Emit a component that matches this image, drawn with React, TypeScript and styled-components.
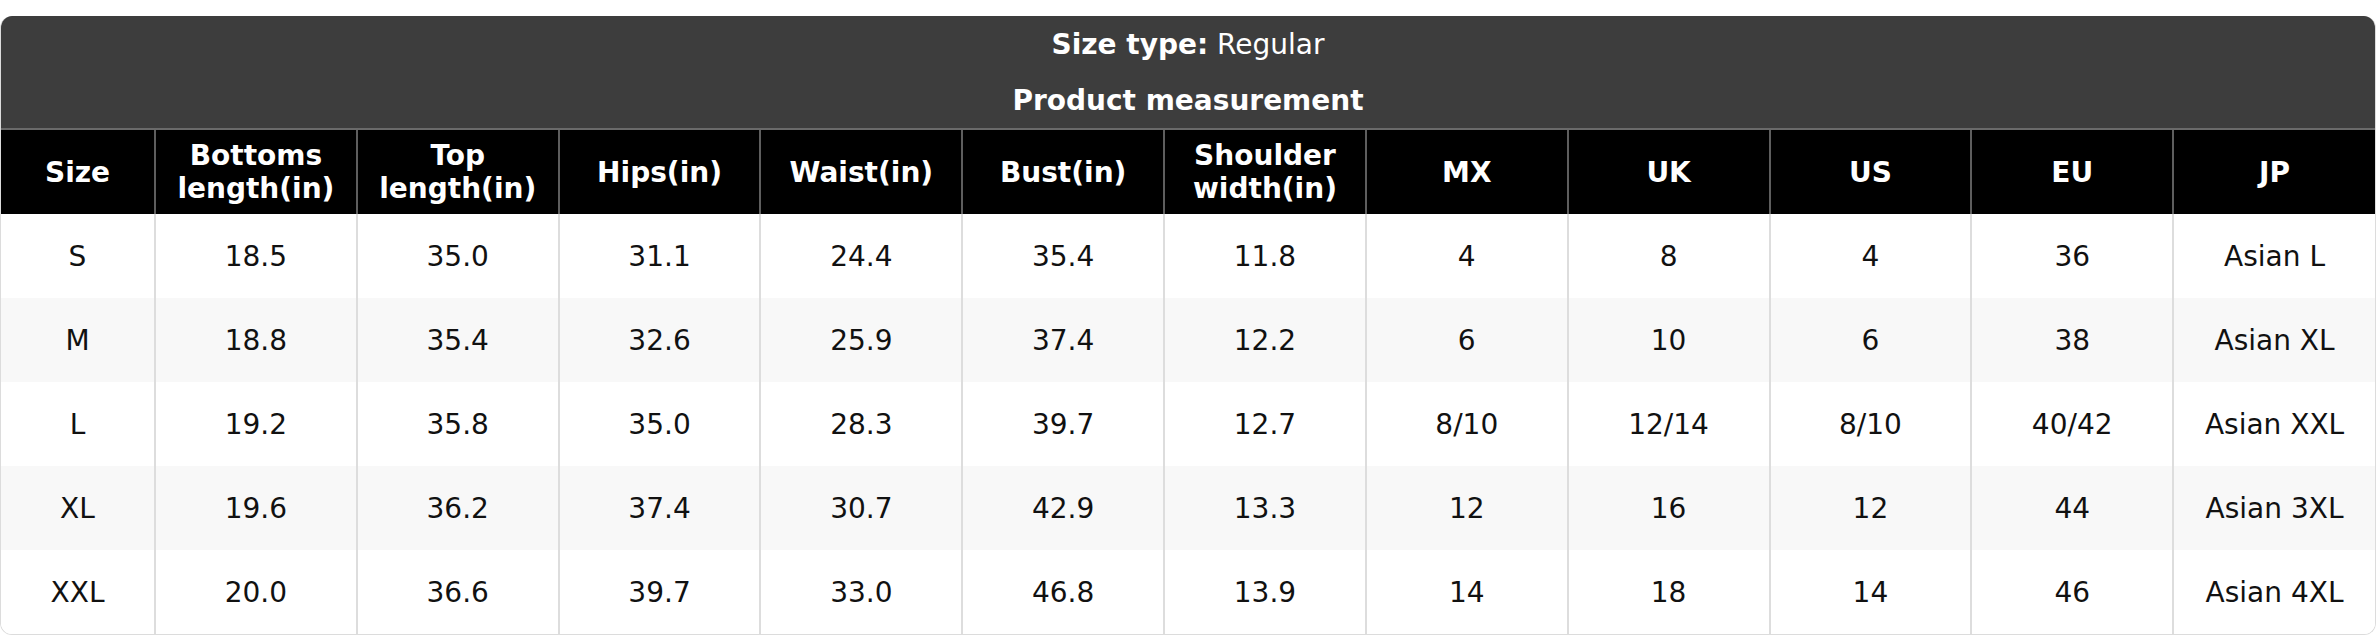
import React from 'react';
import styled, { createGlobalStyle } from 'styled-components';

const GlobalStyle = createGlobalStyle`
    html, body {
        margin: 0;
        padding: 0;
        background: #ffffff;
        font-family: "DejaVu Sans", Verdana, sans-serif;
    }
`

type SizeRow = {
    size: string
    bottoms: string
    top: string
    hips: string
    waist: string
    bust: string
    shoulder: string
    mx: string
    uk: string
    us: string
    eu: string
    jp: string
}

const headers: string[][] = [
    ['Size'],
    ['Bottoms', 'length(in)'],
    ['Top', 'length(in)'],
    ['Hips(in)'],
    ['Waist(in)'],
    ['Bust(in)'],
    ['Shoulder', 'width(in)'],
    ['MX'],
    ['UK'],
    ['US'],
    ['EU'],
    ['JP'],
]

const rows: SizeRow[] = [
    {size: 'S', bottoms: '18.5', top: '35.0', hips: '31.1', waist: '24.4', bust: '35.4', shoulder: '11.8', mx: '4', uk: '8', us: '4', eu: '36', jp: 'Asian L'},
    {size: 'M', bottoms: '18.8', top: '35.4', hips: '32.6', waist: '25.9', bust: '37.4', shoulder: '12.2', mx: '6', uk: '10', us: '6', eu: '38', jp: 'Asian XL'},
    {size: 'L', bottoms: '19.2', top: '35.8', hips: '35.0', waist: '28.3', bust: '39.7', shoulder: '12.7', mx: '8/10', uk: '12/14', us: '8/10', eu: '40/42', jp: 'Asian XXL'},
    {size: 'XL', bottoms: '19.6', top: '36.2', hips: '37.4', waist: '30.7', bust: '42.9', shoulder: '13.3', mx: '12', uk: '16', us: '12', eu: '44', jp: 'Asian 3XL'},
    {size: 'XXL', bottoms: '20.0', top: '36.6', hips: '39.7', waist: '33.0', bust: '46.8', shoulder: '13.9', mx: '14', uk: '18', us: '14', eu: '46', jp: 'Asian 4XL'},
]

const SizeChart = () => {
    return (
        <Card>
            <TitleBar>
                <TitleLine><b>Size type:</b> Regular</TitleLine>
                <TitleLine><b>Product measurement</b></TitleLine>
            </TitleBar>
            <Table>
                <colgroup>
                    <FirstCol/>
                    {headers.slice(1).map((h) => <col key={h.join(' ')}/>)}
                </colgroup>
                <thead>
                    <tr>
                        {headers.map((h) => (
                            <HeadCell key={h.join(' ')}>
                                {h.map((line, i) => <HeadLine key={i}>{line}</HeadLine>)}
                            </HeadCell>
                        ))}
                    </tr>
                </thead>
                <tbody>
                    {rows.map((r, i) => (
                        <BodyRow key={r.size} $striped={i % 2 === 1}>
                            <Cell>{r.size}</Cell>
                            <Cell>{r.bottoms}</Cell>
                            <Cell>{r.top}</Cell>
                            <Cell>{r.hips}</Cell>
                            <Cell>{r.waist}</Cell>
                            <Cell>{r.bust}</Cell>
                            <Cell>{r.shoulder}</Cell>
                            <Cell>{r.mx}</Cell>
                            <Cell>{r.uk}</Cell>
                            <Cell>{r.us}</Cell>
                            <Cell>{r.eu}</Cell>
                            <Cell>{r.jp}</Cell>
                        </BodyRow>
                    ))}
                </tbody>
            </Table>
        </Card>
    );
};

export default function App() {
    return (
        <Page>
            <GlobalStyle/>
            <SizeChart/>
        </Page>
    );
}

const Page = styled.div`
    padding-top: 16px;
`
const Card = styled.div`
    border-radius: 12px;
    overflow: hidden;
    border: 1px solid #dcdcdc;
    border-top: none;
    background: #ffffff;
`
const TitleBar = styled.div`
    background: #3d3d3d;
    color: #ffffff;
    display: flex;
    flex-direction: column;
    border-bottom: 2px solid #6a6a6a;
`
const TitleLine = styled.div`
    height: 56px;
    display: flex;
    align-items: center;
    justify-content: center;
    font-size: 28px;
    white-space: pre;
    b {
        font-weight: bold;
    }
`
const Table = styled.table`
    width: 100%;
    border-collapse: collapse;
    table-layout: fixed;
    font-size: 28px;
`
const FirstCol = styled.col`
    width: 154px;
`
const HeadCell = styled.th`
    background: #000000;
    color: #ffffff;
    font-weight: bold;
    height: 84px;
    padding: 0;
    text-align: center;
    vertical-align: middle;
    border-left: 2px solid #5e5e5e;
    line-height: 33px;
    &:first-child {
        border-left: none;
    }
`
const HeadLine = styled.div`
`
const BodyRow = styled.tr<{ $striped: boolean }>`
    background: ${(p) => (p.$striped ? '#f8f8f8' : '#ffffff')};
    height: 84px;
`
const Cell = styled.td`
    color: #111111;
    text-align: center;
    vertical-align: middle;
    padding: 0;
    border-left: 2px solid #dddddd;
    &:first-child {
        border-left: none;
    }
`
